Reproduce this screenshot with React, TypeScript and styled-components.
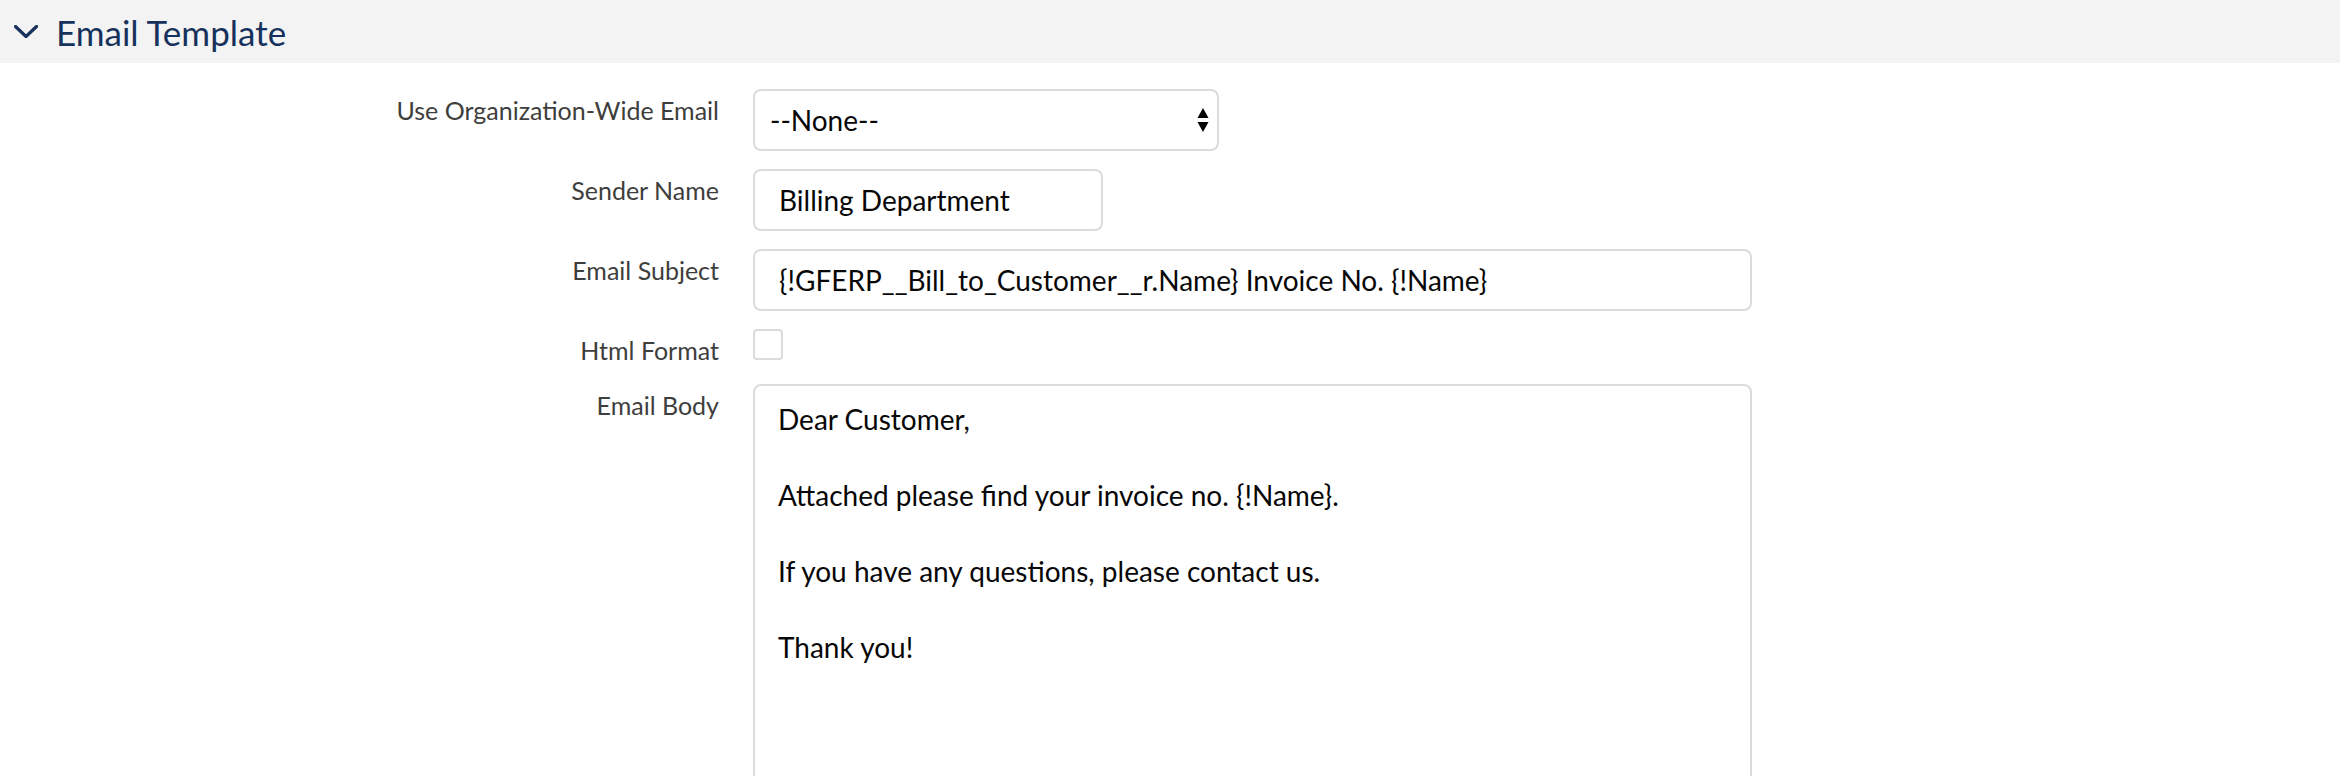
import React from "react";
import styled, { createGlobalStyle } from "styled-components";

const GlobalStyle = createGlobalStyle`
  html, body {
    margin: 0;
    padding: 0;
    background: #ffffff;
    font-family: Lato, "Open Sans", sans-serif;
    overflow: hidden;
  }
`;

const Section = styled.section`
  width: 100%;
`;

const SectionHeader = styled.div`
  display: flex;
  align-items: center;
  gap: 18px;
  height: 63px;
  padding-left: 14px;
  background: #f3f3f3;
`;

const SectionTitle = styled.h2`
  margin: 0;
  font-size: 35px;
  font-weight: 400;
  color: #16325c;
`;

const Form = styled.div`
  display: flex;
  flex-direction: column;
  gap: 18px;
  padding-top: 26px;
`;

const Row = styled.div`
  display: grid;
  grid-template-columns: 719px 1fr;
  column-gap: 34px;
  align-items: start;
`;

const Label = styled.label`
  text-align: right;
  font-size: 25px;
  line-height: 1.2;
  padding-top: 6px;
  color: #3e3e3c;
`;

const Field = styled.div<{ $width: number }>`
  box-sizing: border-box;
  width: ${(p) => p.$width}px;
  height: 62px;
  border: 2px solid #dddbda;
  border-radius: 8px;
  background: #fff;
  display: flex;
  align-items: center;
  padding: 0 24px;
  font-size: 28px;
  color: #080707;
  white-space: nowrap;
`;

const SelectBox = styled(Field)`
  justify-content: space-between;
  padding: 0 8px 0 15px;
  font-size: 28px;
`;

const CheckCell = styled.div`
  height: 37px;
`;

const Checkbox = styled.span`
  display: block;
  box-sizing: border-box;
  width: 30px;
  height: 31px;
  border: 2px solid #dddbda;
  border-radius: 4px;
  background: #fff;
`;

const BodyArea = styled.div`
  box-sizing: border-box;
  width: 999px;
  height: 600px;
  border: 2px solid #dddbda;
  border-radius: 8px;
  padding: 14px 23px;
  font-size: 28px;
  line-height: 38px;
  color: #080707;
`;

const Para = styled.p`
  margin: 0 0 38px;
`;

const Chevron = () => (
  <svg width="24" height="13" viewBox="0 0 24 13" fill="none">
    <path d="M1.5 1.5 L12 11.5 L22.5 1.5" stroke="#16325c" strokeWidth="3.2" strokeLinecap="round" strokeLinejoin="round" />
  </svg>
);

const SelectArrows = () => (
  <svg width="12" height="25" viewBox="0 0 12 25">
    <path d="M6 0 L11.5 10 L0.5 10 Z" fill="#000" />
    <path d="M0.5 14 L11.5 14 L6 24 Z" fill="#000" />
  </svg>
);

const bodyLines = [
  "Dear Customer,",
  "Attached please find your invoice no. {!Name}.",
  "If you have any questions, please contact us.",
  "Thank you!",
];

export default function App() {
  return (
    <>
      <GlobalStyle />
      <Section>
        <SectionHeader>
          <Chevron />
          <SectionTitle>Email Template</SectionTitle>
        </SectionHeader>
        <Form>
          <Row>
            <Label>Use Organization-Wide Email</Label>
            <SelectBox $width={466}>
              <span>--None--</span>
              <SelectArrows />
            </SelectBox>
          </Row>
          <Row>
            <Label>Sender Name</Label>
            <Field $width={350}>Billing Department</Field>
          </Row>
          <Row>
            <Label>Email Subject</Label>
            <Field $width={999}>{"{!GFERP__Bill_to_Customer__r.Name} Invoice No. {!Name}"}</Field>
          </Row>
          <Row>
            <Label>Html Format</Label>
            <CheckCell>
              <Checkbox />
            </CheckCell>
          </Row>
          <Row>
            <Label>Email Body</Label>
            <BodyArea>
              {bodyLines.map((line) => (
                <Para key={line}>{line}</Para>
              ))}
            </BodyArea>
          </Row>
        </Form>
      </Section>
    </>
  );
}
